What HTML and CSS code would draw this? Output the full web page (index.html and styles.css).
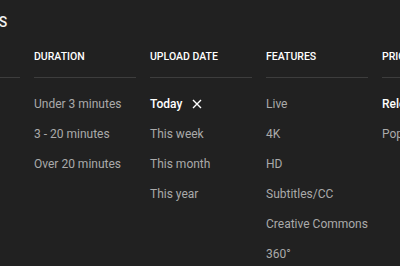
FILE: index.html
```html
<!DOCTYPE html>
<html lang="en">
<head>
    <meta charset="UTF-8">
    <title>Search filters</title>
    <link rel="stylesheet" href="styles.css">
</head>
<body>
    <div class="filters-title">FILTERS</div>

    <div class="filter-groups">
        <div class="filter-group">
            <h4 class="group-header"></h4>
        </div>

        <div class="filter-group">
            <h4 class="group-header">DURATION</h4>
            <ul>
                <li>Under 3 minutes</li>
                <li>3 - 20 minutes</li>
                <li>Over 20 minutes</li>
            </ul>
        </div>

        <div class="filter-group">
            <h4 class="group-header">UPLOAD DATE</h4>
            <ul>
                <li class="selected">Today
                    <svg class="clear-icon" width="10" height="10" viewBox="0 0 10 10">
                        <path d="M1 1 L9 9 M9 1 L1 9" stroke="#fff" stroke-width="1.4" fill="none"/>
                    </svg>
                </li>
                <li>This week</li>
                <li>This month</li>
                <li>This year</li>
            </ul>
        </div>

        <div class="filter-group">
            <h4 class="group-header">FEATURES</h4>
            <ul>
                <li>Live</li>
                <li>4K</li>
                <li>HD</li>
                <li>Subtitles/CC</li>
                <li>Creative Commons</li>
                <li>360°</li>
            </ul>
        </div>

        <div class="filter-group">
            <h4 class="group-header">PRIORITIZE</h4>
            <ul>
                <li class="selected">Relevance</li>
                <li>Popularity</li>
            </ul>
        </div>
    </div>
</body>
</html>
```

FILE: styles.css
```css
body {
    font-family: Roboto, "Liberation Sans", sans-serif;
    margin: 0;
    padding: 12px 0 0 0;
    background-color: #212121;
    overflow: hidden;
}

.filters-title {
    color: #f1f1f1;
    font-size: 14px;
    font-weight: 500;
    line-height: 20px;
    margin-left: -44px;
}

/* columns: first one runs off the left edge */
.filter-groups {
    display: flex;
    gap: 14px;
    margin-left: -82px;
    margin-top: 17px;
}

.filter-group {
    width: 102px;
    flex-shrink: 0;
}

.group-header {
    margin: 0;
    height: 16px;
    color: #ffffff;
    font-size: 10.5px;
    font-weight: 500;
    line-height: 16px;
    white-space: nowrap;
    padding-bottom: 12px;
    border-bottom: 1px solid #3d3d3d;
}

ul {
    list-style: none;
    margin: 11px 0 0 0;
    padding: 0;
}

li {
    display: flex;
    align-items: center;
    color: #aaaaaa;
    font-size: 12px;
    line-height: 30px;
    height: 30px;
    white-space: nowrap;
}

li.selected {
    color: #ffffff;
    font-weight: 500;
}

.clear-icon {
    margin-left: 10px;
}
```
